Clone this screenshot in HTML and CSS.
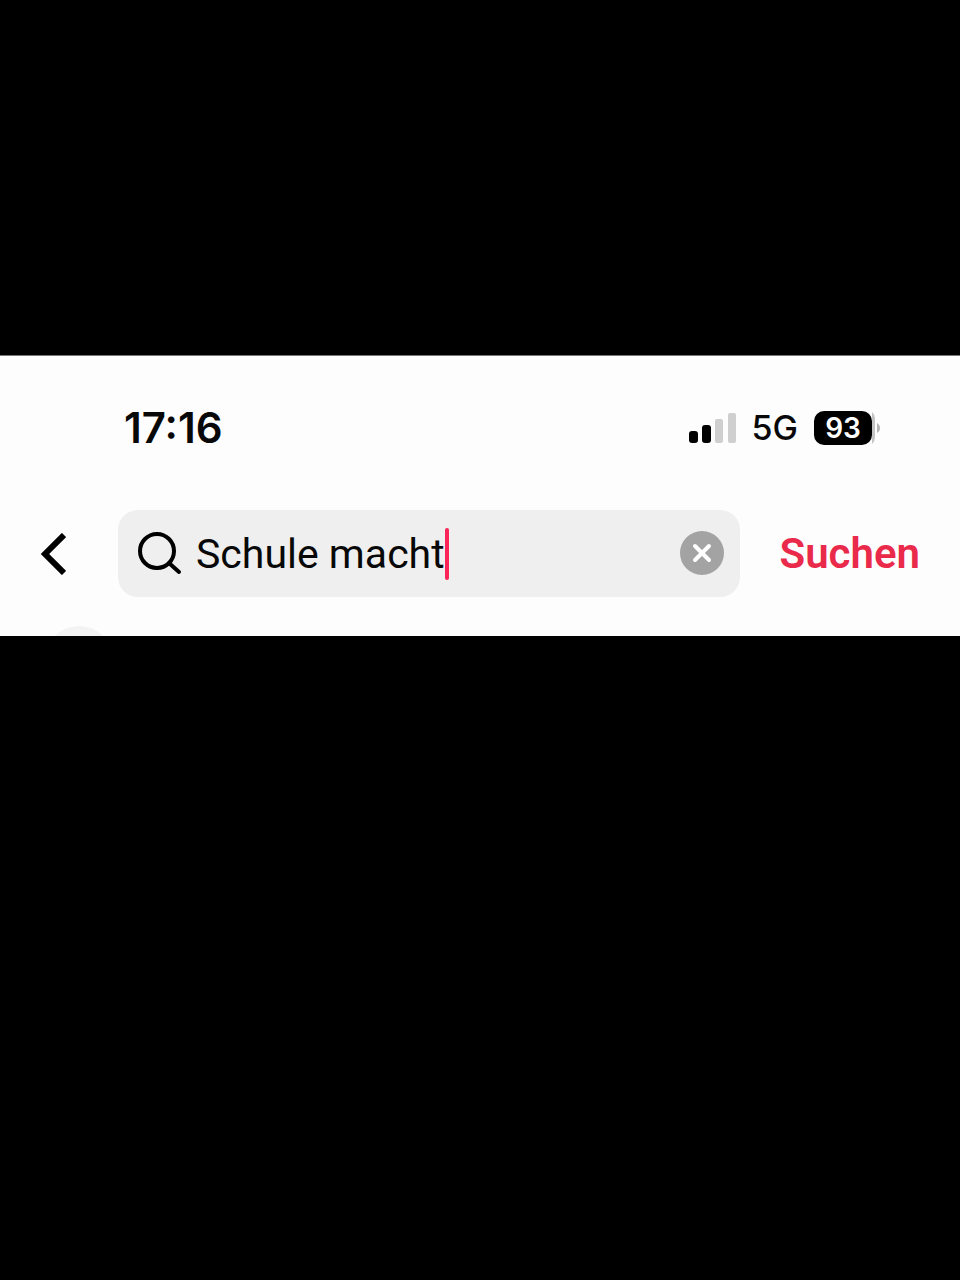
FILE: index.html
```html
<!DOCTYPE html>
<html lang="de">
<head>
    <meta charset="UTF-8">
    <meta name="viewport" content="width=device-width, initial-scale=1.0">
    <title>Suchen</title>
    <link rel="stylesheet" href="styles.css">
</head>
<body>
    <main class="screen">
        <header class="status-bar">
            <time class="clock">17:16</time>
            <div class="status-icons">
                <svg class="signal" viewBox="0 0 48 30" aria-hidden="true">
                    <rect x="1" y="18" width="9" height="12" rx="3"/>
                    <rect x="14" y="12" width="9" height="18" rx="3"/>
                    <rect class="signal-off" x="27" y="6" width="8" height="24" rx="2"/>
                    <rect class="signal-off" x="40" y="0" width="8" height="30" rx="2"/>
                </svg>
                <span class="network">5G</span>
                <div class="battery">
                    <span class="battery-level">93</span>
                    <svg class="battery-tip" viewBox="0 0 8 34" aria-hidden="true">
                        <path d="M0 1C2 3 3 5 3 9v16c0 4-1 6-3 8z" fill="#c4c4c4"/>
                        <path d="M5 12c4 2 4 8 0 10z" fill="#b4b4b4"/>
                    </svg>
                </div>
            </div>
        </header>

        <form class="search-row">
            <button type="button" class="back-btn" aria-label="Zurück">
                <svg viewBox="0 0 26 42" aria-hidden="true">
                    <path d="M24 2L5 21l19 19"/>
                </svg>
            </button>
            <div class="search-field">
                <svg class="search-icon" viewBox="0 0 44 44" aria-hidden="true">
                    <circle cx="19" cy="19" r="17"/>
                    <path d="M31 31l10 9"/>
                </svg>
                <input type="text" class="search-input" value="Schule macht" aria-label="Suche">
                <span class="caret"></span>
                <button type="button" class="clear-btn" aria-label="Löschen">
                    <svg viewBox="0 0 46 46" aria-hidden="true">
                        <circle cx="23" cy="22" r="22"/>
                        <path d="M16 15l14 14M30 15L16 29"/>
                    </svg>
                </button>
            </div>
            <button type="submit" class="submit-btn">Suchen</button>
        </form>

        <div class="results">
            <span class="result-icon"></span>
        </div>
    </main>
</body>
</html>
```
FILE: styles.css
```css
:root {
    --text-color: #080808;
    --accent-color: #ea2a4b;
    --caret-color: #fa2459;
    --field-color: #efefef;
}

* {
    box-sizing: border-box;
    margin: 0;
    padding: 0;
}

body {
    font-family: Inter, "Liberation Sans", sans-serif;
    color: var(--text-color);
    background-color: #000;
    padding-top: 355px;
}

button,
input {
    font: inherit;
    color: inherit;
    background: none;
    border: none;
    outline: none;
}

button {
    display: flex;
    cursor: pointer;
}

.screen {
    background-color: #fdfdfd;
    border-top: 1px solid #777;
}

.status-bar {
    display: flex;
    align-items: center;
    justify-content: space-between;
    padding: 48px 80px 0 124px;
}

.clock {
    font-size: 42px;
    line-height: 48px;
    font-weight: 600;
}

.status-icons {
    display: flex;
    align-items: center;
    gap: 16px;
}

.signal {
    width: 48px;
    height: 30px;
}

.signal-off {
    fill: #cfcfcf;
}

.network {
    font-size: 34px;
    line-height: 48px;
    font-weight: 500;
}

.battery {
    display: flex;
    align-items: center;
}

.battery-level {
    width: 58px;
    border-radius: 10px;
    background-color: #000;
    color: #fff;
    font-size: 28px;
    line-height: 34px;
    font-weight: 600;
    text-align: center;
}

.battery-tip {
    width: 8px;
    height: 34px;
}

.search-row {
    display: flex;
    align-items: center;
    gap: 40px;
    padding: 58px 40px 0;
}

.back-btn {
    margin-right: 12px;
}

.back-btn svg {
    width: 26px;
    height: 42px;
    fill: none;
    stroke: #000;
    stroke-width: 6;
}

.search-field {
    flex: 1;
    min-width: 0;
    display: flex;
    align-items: center;
    height: 87px;
    padding: 0 15px 0 20px;
    border-radius: 20px;
    background-color: var(--field-color);
}

.search-icon {
    flex: none;
    width: 44px;
    height: 44px;
    margin-right: 14px;
    fill: none;
    stroke: #000;
    stroke-width: 4;
    stroke-linecap: round;
}

.search-input {
    field-sizing: content;
    font-family: Roboto, sans-serif;
    font-size: 41px;
    line-height: 52px;
}

.caret {
    flex: none;
    width: 4px;
    height: 52px;
    border-radius: 2px;
    background-color: var(--caret-color);
}

.clear-btn {
    margin-left: auto;
}

.clear-btn svg {
    width: 46px;
    height: 46px;
    fill: #a3a3a3;
}

.clear-btn path {
    stroke: #fff;
    stroke-width: 4;
    stroke-linecap: round;
}

.submit-btn {
    color: var(--accent-color);
    font-family: Roboto, sans-serif;
    font-size: 42px;
    line-height: 52px;
    font-weight: 600;
}

.results {
    height: 39px;
    padding: 29px 45px 0;
    overflow: hidden;
}

.result-icon {
    display: block;
    width: 68px;
    height: 68px;
    border-radius: 50%;
    background-color: #f3f3f3;
}
```
